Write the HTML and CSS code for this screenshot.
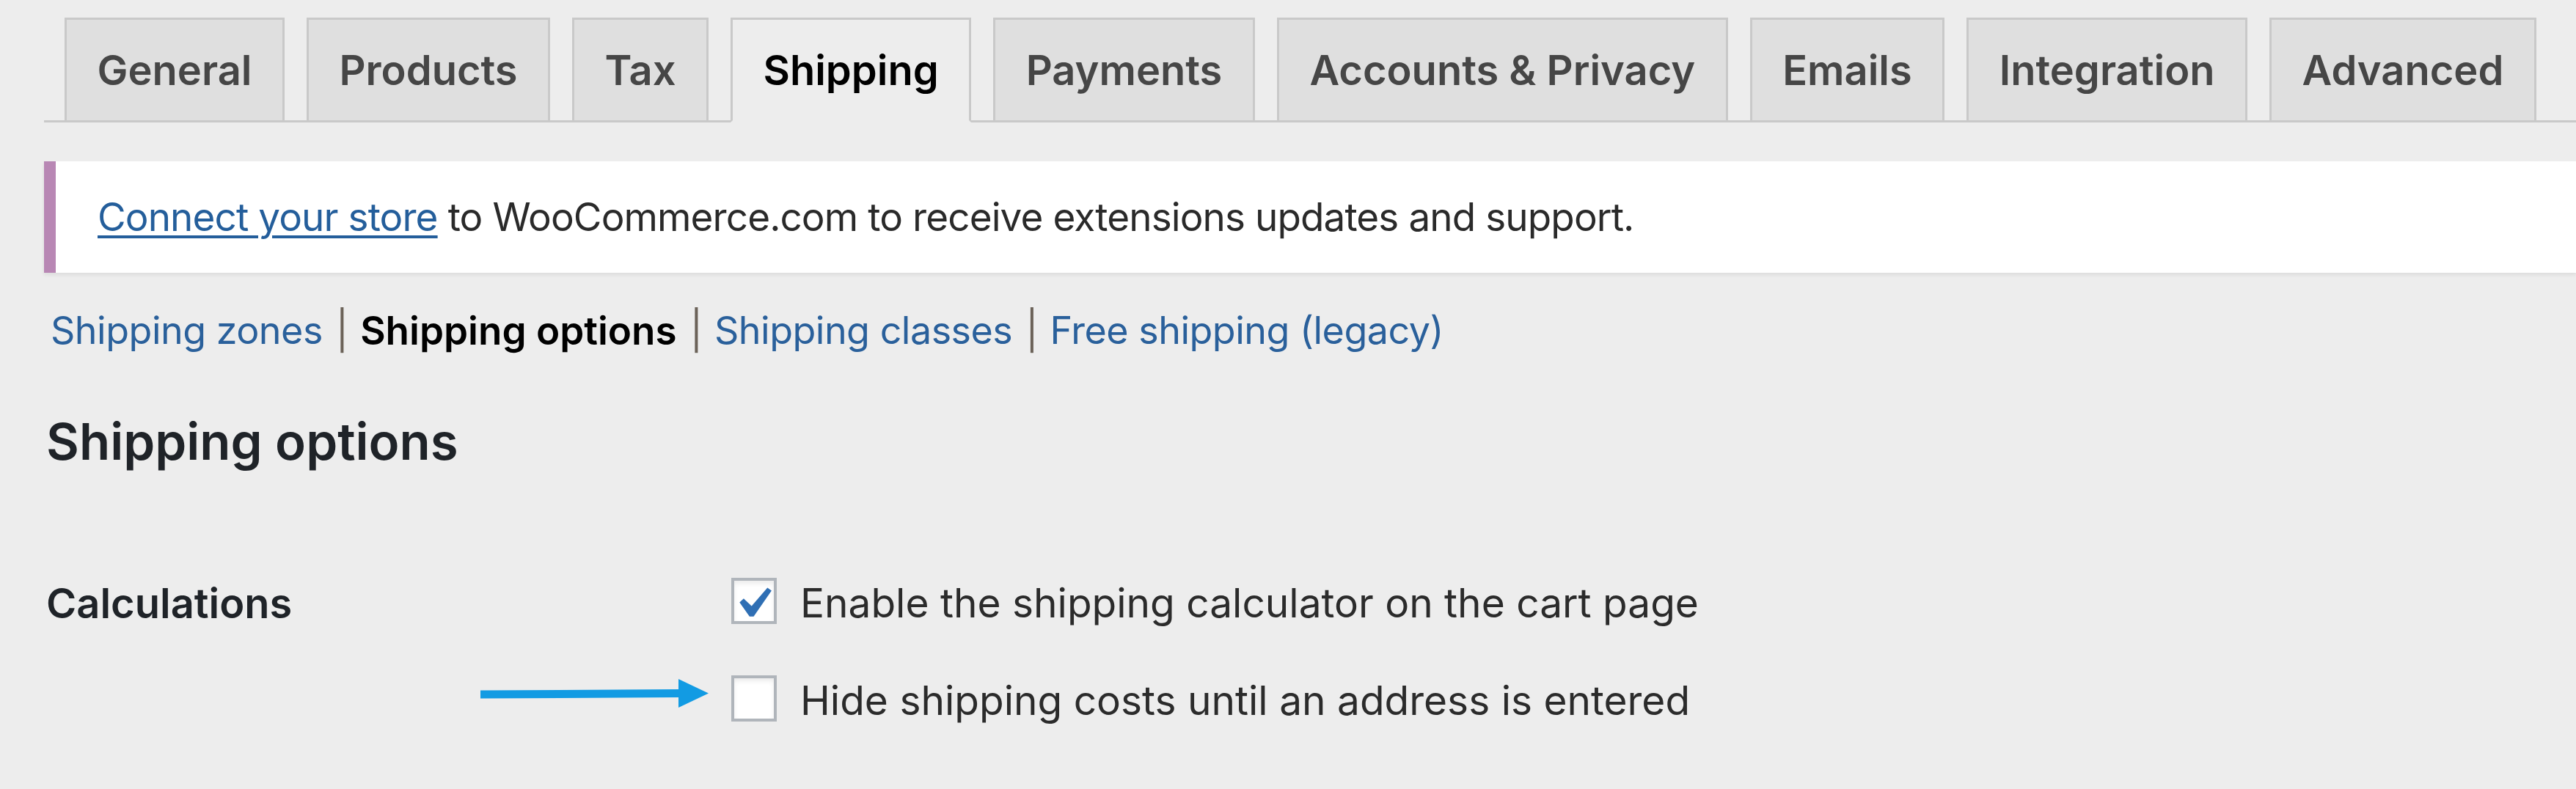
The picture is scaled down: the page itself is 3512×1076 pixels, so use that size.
FILE: index.html
```html
<!DOCTYPE html>
<html lang="en">
<head>
<meta charset="utf-8">
<title>WooCommerce Settings – Shipping options</title>
<link rel="stylesheet" href="styles.css">
</head>
<body>
<div class="wrap">
  <nav class="tabs">
    <a class="tab">General</a>
    <a class="tab">Products</a>
    <a class="tab">Tax</a>
    <a class="tab tab-active">Shipping</a>
    <a class="tab">Payments</a>
    <a class="tab">Accounts &amp; Privacy</a>
    <a class="tab">Emails</a>
    <a class="tab">Integration</a>
    <a class="tab">Advanced</a>
  </nav>

  <div class="notice">
    <p><a class="link-u" href="#">Connect your store</a> to WooCommerce.com to receive extensions updates and support.</p>
  </div>

  <ul class="subsub">
    <li><a class="sublink" href="#">Shipping zones</a><span class="sep">|</span></li>
    <li><span class="current">Shipping options</span><span class="sep">|</span></li>
    <li><a class="sublink" href="#">Shipping classes</a><span class="sep">|</span></li>
    <li><a class="sublink" href="#">Free shipping (legacy)</a></li>
  </ul>

  <h2 class="section-title">Shipping options</h2>

  <div class="form-row">
    <div class="row-label">Calculations</div>
    <div class="row-field">
      <label class="option">
        <span class="checkbox">
          <svg class="check" viewBox="0 0 20 20" width="84" height="84"><path d="M14.83 4.89l1.34.94-5.81 8.38H9.02L5.78 9.67l1.34-1.25 2.57 2.4z"/></svg>
        </span>
        <span class="option-text">Enable the shipping calculator on the cart page</span>
      </label>
      <label class="option">
        <svg class="arrow" width="314" height="42" viewBox="0 0 314 42"><polygon points="2,16.5 274,15 274,26 2,27.5"/><polygon points="272,1 313,20.5 272,40"/></svg>
        <span class="checkbox"></span>
        <span class="option-text">Hide shipping costs until an address is entered</span>
      </label>
    </div>
  </div>
</div>
</body>
</html>
```
FILE: styles.css
```css
html, body {
  margin: 0;
  padding: 0;
}
body {
  background: #ededed;
  font-family: Inter, "Noto Sans", "Liberation Sans", sans-serif;
  color: #23282d;
  width: 3512px;
  height: 1076px;
  overflow: hidden;
}
.wrap {
  padding: 24px 0 0 60px;
}

/* Tabs */
.tabs {
  display: flex;
  gap: 30px;
  padding-left: 28px;
  border-bottom: 3px solid #c9c9c9;
}
.tab {
  box-sizing: border-box;
  height: 143px;
  margin-bottom: -3px;
  display: flex;
  align-items: center;
  padding: 0 41.5px;
  border: 3px solid #c9c9c9;
  background: #dfdfdf;
  color: #464646;
  font-size: 56px;
  font-weight: 600;
  white-space: nowrap;
}
.tab-active {
  background: #ededed;
  border-bottom-color: #ededed;
  color: #000;
}

/* Notice */
.notice {
  box-sizing: border-box;
  margin-top: 53px;
  height: 152px;
  display: flex;
  align-items: center;
  background: #fff;
  border-left: 16px solid #b887b4;
  box-shadow: 0 3px 5px rgba(0, 0, 0, 0.07);
  padding-left: 57px;
}
.notice p {
  margin: 0;
  font-size: 53px;
  letter-spacing: -0.9px;
  line-height: 80px;
  color: #2a2a2a;
}
.link-u {
  color: #245e9b;
  text-decoration: underline;
  text-decoration-thickness: 4px;
  text-underline-offset: 6px;
}

/* Sub navigation */
.subsub {
  list-style: none;
  margin: 39px 0 0;
  padding: 0 0 0 9px;
  display: flex;
  font-size: 52px;
  line-height: 80px;
}
.subsub li {
  display: flex;
  white-space: nowrap;
}
.sublink {
  color: #2a609b;
  text-decoration: none;
  letter-spacing: -0.5px;
}
.current {
  color: #000;
  font-weight: 600;
  font-size: 53px;
}
.sep {
  color: #6b6258;
  padding: 0 16px 0 18px;
}

/* Heading */
.section-title {
  margin: 66px 0 0 3px;
  font-size: 69px;
  line-height: 90px;
  font-weight: 600;
  color: #1f2328;
}

/* Form */
.form-row {
  margin-top: 141px;
  display: grid;
  grid-template-columns: 937px 1fr;
}
.row-label {
  padding: 4px 0 0 3px;
  font-size: 56px;
  line-height: 63px;
  font-weight: 600;
  color: #1f2328;
}
.row-field {
  display: flex;
  flex-direction: column;
  gap: 70px;
}
.option {
  position: relative;
  display: flex;
  align-items: center;
  gap: 32px;
}
.checkbox {
  position: relative;
  box-sizing: border-box;
  width: 62px;
  height: 63px;
  flex: none;
  background: #fff;
  border: 4px solid #b0b5bb;
  box-shadow: inset 0 4px 6px rgba(0, 0, 0, 0.08);
}
.check {
  position: absolute;
  left: -17px;
  top: -11px;
  fill: #2f6fb4;
}
.option-text {
  padding-top: 6px;
  font-size: 55px;
  line-height: 57px;
  color: #2b2b2b;
  white-space: nowrap;
}
.arrow {
  position: absolute;
  left: -344px;
  top: 4px;
  fill: #129be3;
}
```
